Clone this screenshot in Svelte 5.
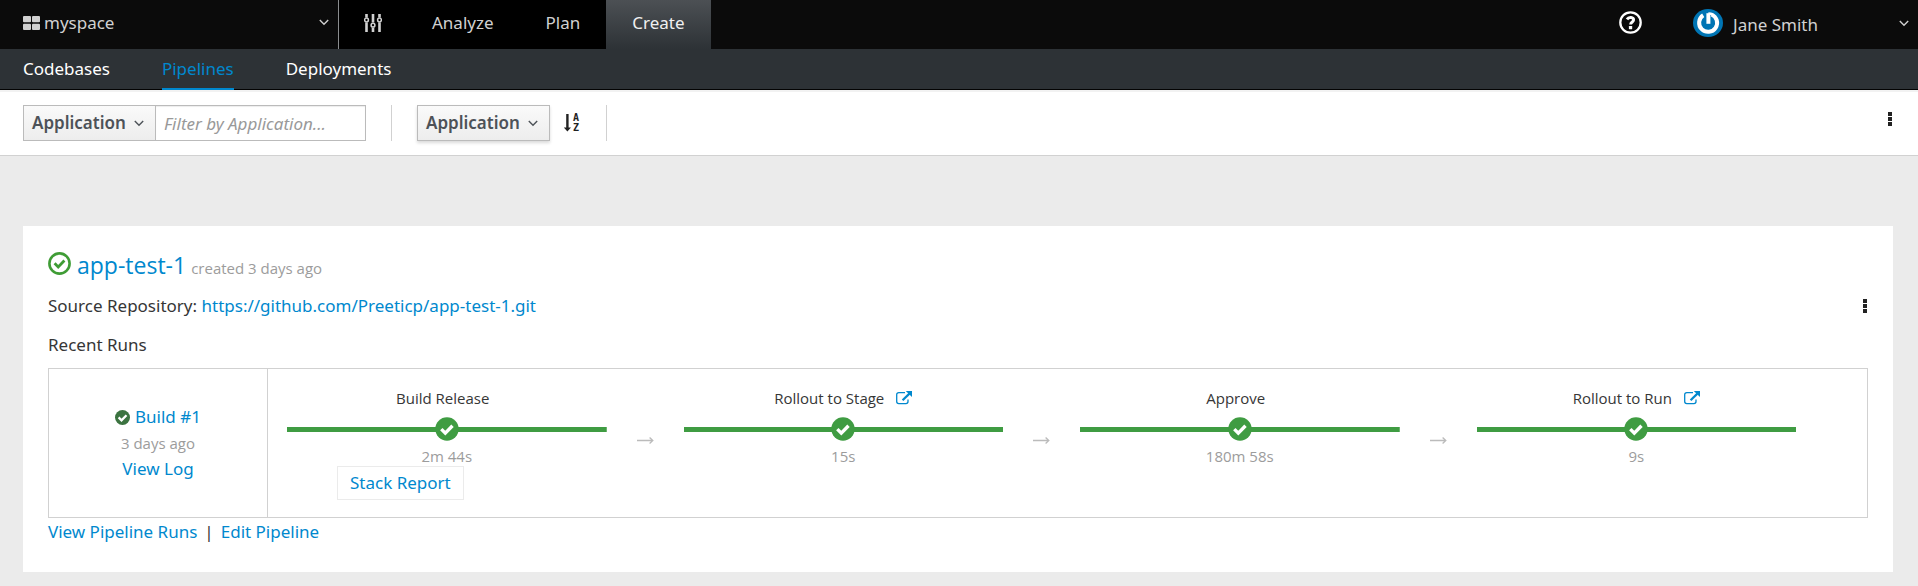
<script>
  const stages = [
    { name: 'Build Release', time: '2m 44s', report: true },
    { name: 'Rollout to Stage', time: '15s', link: true },
    { name: 'Approve', time: '180m 58s' },
    { name: 'Rollout to Run', time: '9s', link: true }
  ];
  let filter = $state('');
</script>

{#snippet chevron()}
  <svg class="chevron" width="10" height="7" viewBox="0 0 10 7" aria-hidden="true">
    <path d="M.8 1 5 5.3 9.2 1" fill="none" stroke="currentColor" stroke-width="1.4" />
  </svg>
{/snippet}

{#snippet kebab()}
  <svg width="4" height="14" viewBox="0 0 4 14" aria-hidden="true">
    <path d="M0 0h4v4H0zM0 5h4v4H0zM0 10h4v4H0z" fill="#222" />
  </svg>
{/snippet}

<header class="masthead">
  <button class="space">
    <svg width="17" height="14" viewBox="0 0 17 14" aria-hidden="true">
      <g fill="#d1d1d1">
        <rect width="8" height="6.3" rx="1" /><rect x="9" width="8" height="6.3" rx="1" />
        <rect y="7.7" width="8" height="6.3" rx="1" /><rect x="9" y="7.7" width="8" height="6.3" rx="1" />
      </g>
    </svg>
    <span class="space-name">myspace</span>
    {@render chevron()}
  </button>
  <nav class="primary" aria-label="Primary">
    <a href="#settings" aria-label="Settings">
      <svg width="18" height="18" viewBox="0 0 18 18" aria-hidden="true">
        <g fill="none" stroke="#d1d1d1">
          <path stroke-width="2.6" d="M2.5 0v3.4M2.5 8.6V18M9 0v8.6M9 13.8V18M15.500 0v3.400M15.500 8.600V18" />
          <circle cx="2.500" cy="6" r="1.900" stroke-width="1.500" />
          <circle cx="9" cy="11.200" r="1.900" stroke-width="1.500" />
          <circle cx="15.500" cy="6" r="1.900" stroke-width="1.500" />
        </g>
      </svg>
    </a>
    <a href="#analyze">Analyze</a>
    <a href="#plan">Plan</a>
    <a href="#create" class="active">Create</a>
  </nav>
  <button class="help" aria-label="Help">
    <svg width="23" height="23" viewBox="0 0 23 23" aria-hidden="true">
      <circle cx="11.500" cy="11.500" r="10.200" fill="none" stroke="#fff" stroke-width="2.300" />
      <path d="M8 8.400C9.800 5.600 14.600 6 14.600 9c0 2-3 2.100-3 4.600" fill="none" stroke="#fff" stroke-width="2.900" />
      <rect x="9.900" y="15" width="3.300" height="3.200" rx=".4" fill="#fff" />
    </svg>
  </button>
  <button class="user">
    <svg width="30" height="28" viewBox="0 0 30 28" aria-hidden="true">
      <ellipse cx="15" cy="14" rx="15" ry="14" fill="#0075b4" />
      <path d="M10.200 6.300A9 9 0 1 0 18.500 5.500" fill="none" stroke="#fff" stroke-width="4" />
      <path d="M15.400 4.200v10.600" stroke="#fff" stroke-width="4" />
      <path d="M15.400 4.500c2 0 3 .2 4.500 1" fill="none" stroke="#fff" stroke-width="2.500" />
    </svg>
    <span>Jane Smith</span>
    {@render chevron()}
  </button>
</header>

<nav class="secondary" aria-label="Create">
  <a href="#codebases">Codebases</a>
  <a href="#pipelines" class="current">Pipelines</a>
  <a href="#deployments">Deployments</a>
</nav>

<div class="toolbar">
  <button class="btn">Application {@render chevron()}</button>
  <input type="text" aria-label="Filter by Application" placeholder="Filter by Application..." bind:value={filter} />
  <span class="rule"></span>
  <button class="btn raised">Application {@render chevron()}</button>
  <button class="plain sort" aria-label="Sort ascending">
    <svg width="17" height="20" viewBox="0 0 17 20" aria-hidden="true">
      <path d="M2.200 1h2.400v13.500H7L3.400 18.500-.2 14.500h2.400z" fill="#222" />
      <text x="9" y="8">A</text>
      <text x="9" y="18">Z</text>
    </svg>
  </button>
  <span class="rule"></span>
  <button class="plain more" aria-label="More actions">{@render kebab()}</button>
</div>

<main class="card">
  <div class="title">
    <svg width="23" height="23" viewBox="0 0 23 23" aria-hidden="true">
      <circle cx="11.500" cy="11.500" r="10.100" fill="none" stroke="#3f9c35" stroke-width="2.600" />
      <path d="m6.600 11.200 3.600 3.700 6.200-6.400" fill="none" stroke="#3f9c35" stroke-width="2.800" />
    </svg>
    <h1><a href="#app-test-1">app-test-1</a></h1>
    <small>created 3 days ago</small>
  </div>
  <div class="source">
    <p>Source Repository: <a href="#repository">https://github.com/Preeticp/app-test-1.git</a></p>
    <button class="plain" aria-label="Pipeline actions">{@render kebab()}</button>
  </div>
  <h2>Recent Runs</h2>
  <section class="run">
    <div class="build">
      <div class="build-name">
        <svg width="15" height="15" viewBox="0 0 15 15" aria-hidden="true">
          <circle cx="7.500" cy="7.500" r="7.500" fill="#3b7340" />
          <path d="m3.600 7.400 2.900 2.900 5-5" fill="none" stroke="#fff" stroke-width="2.300" />
        </svg>
        <a href="#build-1">Build #1</a>
      </div>
      <small>3 days ago</small>
      <a href="#log">View Log</a>
    </div>
    <ol class="stages">
      {#each stages as stage, i}
        <li>
          <div class="stage">
            <div class="stage-name">
              <span>{stage.name}</span>
              {#if stage.link}
                <a href="#open" aria-label="Open {stage.name}">
                  <svg width="16" height="14" viewBox="0 0 16 14" aria-hidden="true">
                    <path d="M9 1.700H2.800Q.7 1.700.7 3.800v6.800q0 2.100 2.100 2.100h7.100q2.100 0 2.100-2.100V8.500" fill="none" stroke="#0088ce" stroke-width="1.300" />
                    <path d="M6.600 9.300 13.400 2.600" stroke="#0088ce" stroke-width="2.200" />
                    <path d="M9.800 0H16v6z" fill="#0088ce" />
                  </svg>
                </a>
              {/if}
            </div>
            <div class="track">
              <svg width="24" height="24" viewBox="0 0 24 24" aria-hidden="true">
                <circle cx="12" cy="12" r="11.700" fill="#3f9c42" />
                <path d="m6.300 12.100 4 4 7.200-7.300" fill="none" stroke="#fff" stroke-width="3.400" />
              </svg>
            </div>
            <div class="time">{stage.time}</div>
            {#if stage.report}<button class="report">Stack Report</button>{/if}
          </div>
          <div class="arrow">
            {#if i < stages.length - 1}
              <svg width="17" height="7" viewBox="0 0 17 7" aria-hidden="true">
                <path d="M0 3.500h16M12.600.5l3.200 3-3.200 3" fill="none" stroke="#bbb" stroke-width="1.300" />
              </svg>
            {/if}
          </div>
        </li>
      {/each}
    </ol>
  </section>
  <div class="links">
    <a href="#runs">View Pipeline Runs</a><span>|</span><a href="#edit">Edit Pipeline</a>
  </div>
</main>

<style>
  :global(body) {
    margin: 0;
    background: #ebebeb;
    color: #363636;
    font: 17px/24px "Noto Sans", "Open Sans", sans-serif;
  }
  :global(*) { box-sizing: border-box; }
  svg { display: block; flex: none; }
  a { color: #0088ce; text-decoration: none; }
  button { font: inherit; cursor: pointer; }
  p, h1, h2, ol { margin: 0; padding: 0; font-weight: 400; }

  .masthead {
    display: flex;
    height: 49px;
    background: #0b0b0b;
    color: #d1d1d1;
  }
  .masthead button {
    display: flex;
    align-items: center;
    border: 0;
    background: none;
    color: inherit;
  }
  .masthead .space {
    width: 339px;
    padding: 0 9px 4px 23px;
    gap: 4px;
    border-right: 1px solid #8b8d8f;
  }
  .space-name { flex: 1; text-align: left; }
  .primary { display: flex; background: #000; }
  .primary a {
    display: flex;
    align-items: center;
    padding: 0 26px 4px;
    color: #d1d1d1;
  }
  .primary a:first-child { padding: 0 24px 4px 25px; }
  .primary .active {
    background: linear-gradient(#4c5054, #2d3236);
    color: #f0f0f0;
  }
  .masthead .help { margin-left: auto; padding: 0 25px 4px; }
  .masthead .user {
    width: 251px;
    padding: 0 9px 3px 26px;
    gap: 10px;
  }
  .user span { flex: 1; text-align: left; padding-top: 3px; }

  .secondary {
    display: flex;
    gap: 52px;
    padding: 0 23px;
    background: #2d3236;
    border-bottom: 1px solid #030303;
  }
  .secondary a {
    margin-bottom: -1px;
    padding: 8px 0 7px;
    border-bottom: 2px solid transparent;
    color: #fff;
  }
  .secondary .current { color: #0088ce; border-color: #0088ce; }

  .toolbar {
    display: flex;
    align-items: center;
    height: 66px;
    padding: 0 26px 1px 23px;
    border-top: 2px solid #f2f2f2;
    border-bottom: 1px solid #d1d1d1;
    background: #fff;
  }
  .btn {
    display: flex;
    align-items: center;
    justify-content: space-between;
    width: 133px;
    height: 36px;
    padding: 0 11px 0 8px;
    border: 1px solid #bbb;
    background: linear-gradient(#fafafa, #ededed);
    color: #4d5258;
    font-weight: 600;
  }
  .raised { box-shadow: 0 2px 3px rgba(3, 3, 3, .15); }
  .plain { display: flex; padding: 0; border: 0; background: none; }
  input {
    width: 210px;
    height: 36px;
    padding: 0 8px;
    border: 1px solid #bbb;
    border-left: 0;
    background: #fff;
    box-shadow: inset 0 1px 1px rgba(3, 3, 3, .075);
    font: inherit;
  }
  input::placeholder { color: #999; font-style: italic; opacity: 1; }
  .rule { width: 1px; height: 36px; margin: 0 25px; background: #d1d1d1; }
  .sort { margin-left: 14px; }
  .sort text { font: bold 10px "DejaVu Sans Mono", monospace; fill: #222; }
  .more { margin: 0 0 8px auto; }

  .card {
    margin: 70px 25px 0 23px;
    padding: 22px 25px 28px;
    background: #fff;
  }
  .title { display: flex; align-items: baseline; height: 34px; line-height: 34px; }
  .title svg { align-self: flex-start; margin-top: 4px; }
  h1 { margin: 0 5px 0 6px; font: 23px/34px "Open Sans", sans-serif; }
  small { color: #9c9c9c; font-family: "Open Sans", sans-serif; font-size: 15px; }
  .source {
    display: flex;
    justify-content: space-between;
    align-items: center;
    margin: 12px 1px 15px 0;
  }
  h2 { margin-bottom: 11px; font-size: 17px; }
  .run { display: flex; border: 1px solid #d1d1d1; }
  .build {
    display: flex;
    flex-direction: column;
    align-items: center;
    justify-content: center;
    gap: 2px;
    width: 219px;
    border-right: 1px solid #d1d1d1;
  }
  .build-name { display: flex; align-items: center; gap: 5px; }
  .stages {
    display: flex;
    flex: 1;
    padding: 18px 13px 17px 0;
    list-style: none;
  }
  .stages li { display: flex; flex: 1; padding-left: 19px; }
  .stage { flex: 1; font-family: "Open Sans", sans-serif; font-size: 15px; }
  .stage-name {
    display: flex;
    justify-content: center;
    align-items: center;
    height: 22px;
  }
  .stage-name span { margin-right: 8px; }
  .stage-name a { margin-left: 4px; }
  .track {
    display: flex;
    justify-content: center;
    margin: 8px 0 5px;
    background: linear-gradient(#3f9c42, #3f9c42) center / 100% 5px no-repeat;
  }
  .time { color: #9c9c9c; line-height: 20px; text-align: center; }
  .report {
    display: block;
    height: 34px;
    margin-left: 50px;
    padding: 0 12px;
    border: 1px solid #ebebeb;
    background: #fff;
    color: #0088ce;
    font: 17px/24px "Noto Sans", "Open Sans", sans-serif;
  }
  .arrow { width: 58px; padding: 50px 0 0 30px; }
  .links { display: flex; gap: 7px; margin-top: 2px; }
</style>
